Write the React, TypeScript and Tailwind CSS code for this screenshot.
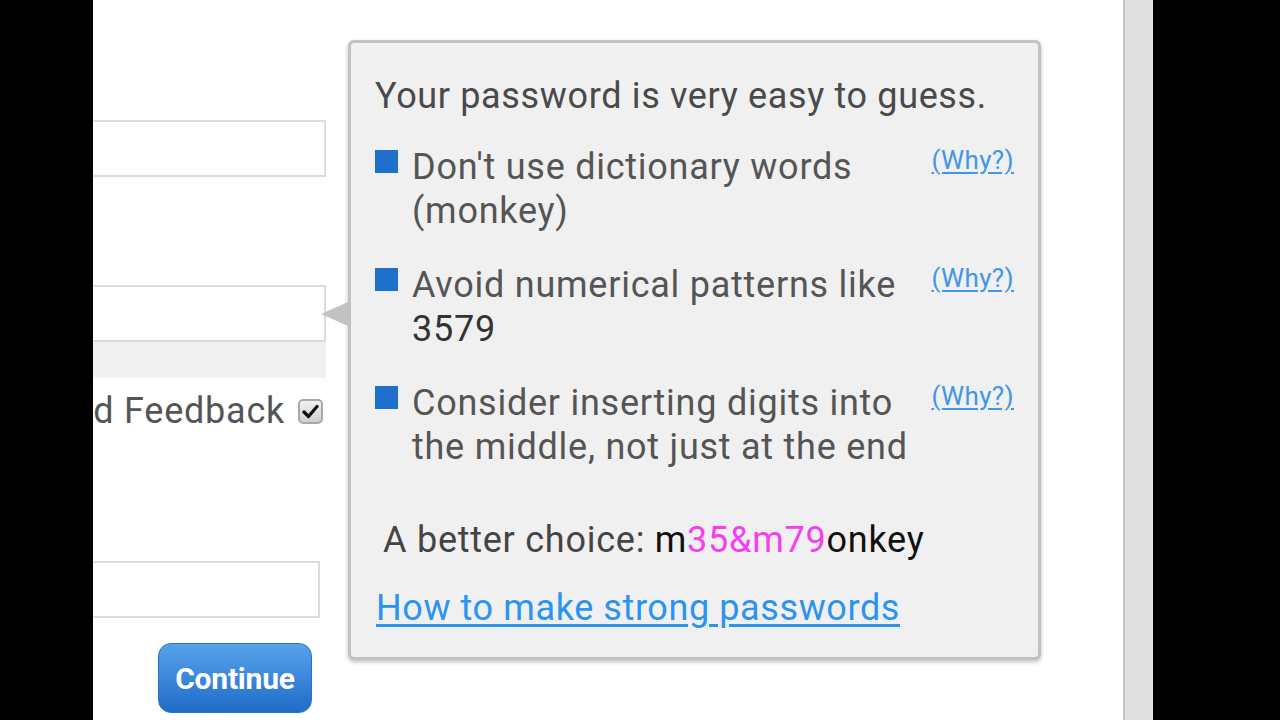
import React from "react";

const font = { fontFamily: "Roboto, 'Noto Sans', sans-serif" };

function Bullet({ lines }: { lines: React.ReactNode[] }) {
  return (
    <div className="flex items-start">
      <div className="mt-[9px] h-[23px] w-[23px] shrink-0 bg-[#1f6fcc]" />
      <div className="ml-[14px] flex-1 whitespace-nowrap pt-[4px] text-[36px] leading-[44px] tracking-[0.75px] text-[#555]">
        {lines.map((l, i) => (
          <div key={i}>{l}</div>
        ))}
      </div>
      <a className="mt-[3px] shrink-0 text-[26px] leading-[32px] tracking-[0.4px] text-[#4096e8] underline underline-offset-[3px]">(Why?)</a>
    </div>
  );
}

export default function App() {
  return (
    <div className="flex h-[720px] w-[1280px] overflow-hidden bg-black" style={font}>
      <div className="w-[93px] shrink-0 bg-black" />
      <div className="flex w-[1030px] shrink-0 bg-white">
        {/* form column */}
        <div className="flex w-[233px] shrink-0 flex-col overflow-hidden pt-[120px]">
          <div className="h-[57px] w-full border-y-2 border-r-2 border-[#dcdcdc] bg-white" />
          <div className="mt-[108px] h-[57px] w-full border-y-2 border-r-2 border-[#dcdcdc] bg-white" />
          <div className="h-[36px] w-full bg-[#f1f1f1]" />
          <div className="mt-[11px] flex h-[44px] items-center justify-end pr-[3px]">
            <span className="shrink-0 whitespace-nowrap text-[36px] leading-[44px] tracking-[0.75px] text-[#555]">Advanced Feedback</span>
            <span className="ml-[13px] flex h-[25px] w-[25px] shrink-0 items-center justify-center rounded-[5px] border-2 border-[#a9a9a9] bg-gradient-to-b from-[#f2f2f2] to-[#cfcfcf]">
              <svg width="17" height="15" viewBox="0 0 17 15">
                <path d="M2 8 L6.5 12.5 L15 2.5" fill="none" stroke="#111" strokeWidth="3.2" strokeLinecap="round" strokeLinejoin="round" />
              </svg>
            </span>
          </div>
          <div className="mt-[128px] h-[57px] w-[227px] border-y-2 border-r-2 border-[#dcdcdc] bg-white" />
          <div className="mt-[25px] flex w-[219px] justify-end">
            <button className="flex h-[70px] w-[154px] items-center justify-center rounded-[13px] border border-[#2a72c8] bg-gradient-to-b from-[#57a2ea] to-[#1f6cc9] text-[30px] font-bold tracking-[-0.2px] text-white">
              Continue
            </button>
          </div>
        </div>

        {/* popup */}
        <div className="relative ml-[22px] mt-[40px] h-[620px] w-[693px] shrink-0 rounded-[6px] border-[3px] border-[#c2c2c2] bg-[#f0f0f0] px-[24px] pt-[31px] shadow-[0_2px_4px_rgba(0,0,0,0.25)]">
          <div className="absolute left-[-30px] top-[259px] h-0 w-0 border-y-[12px] border-r-[27px] border-y-transparent border-r-[#c2c2c2]" />
          <div className="whitespace-nowrap text-[36px] leading-[44px] tracking-[0.65px] text-[#4a4a4a]">Your password is very easy to guess.</div>
          <div className="mt-[23px] flex flex-col gap-[26px]">
            <Bullet lines={["Don't use dictionary words", "(monkey)"]} />
            <Bullet lines={["Avoid numerical patterns like", <span className="text-[#333]">3579</span>]} />
            <Bullet lines={["Consider inserting digits into", "the middle, not just at the end"]} />
          </div>
          <div className="mt-[49px] whitespace-nowrap pl-[8px] text-[36px] leading-[44px] tracking-[0.75px] text-[#444]">
            A better choice: <span className="text-[#111]">m</span>
            <span className="text-[#f53ef0]">35&amp;m79</span>
            <span className="text-[#111]">onkey</span>
          </div>
          <div className="mt-[24px] whitespace-nowrap pl-[1px] text-[36px] leading-[44px] tracking-[0.6px]">
            <a className="text-[#2b94f0] underline underline-offset-[4px]">How to make strong passwords</a>
          </div>
        </div>
      </div>
      <div className="w-[30px] shrink-0 border-l-2 border-[#c6c6c6] bg-[#e0e0e0]" />
      <div className="flex-1 bg-black" />
    </div>
  );
}
